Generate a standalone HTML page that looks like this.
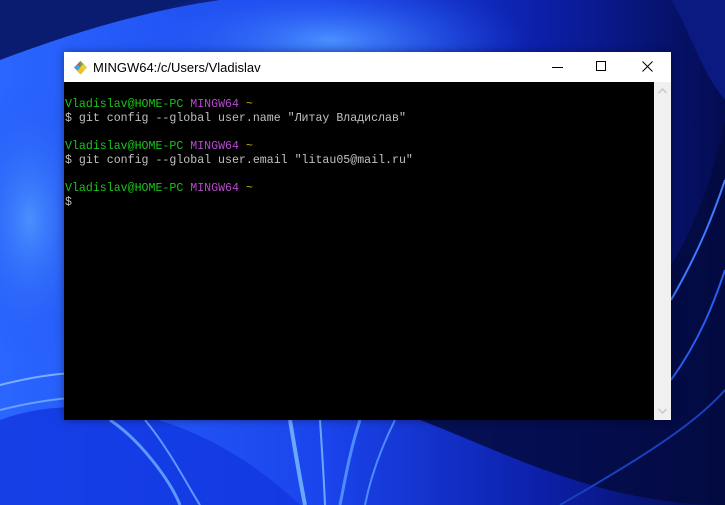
<!DOCTYPE html>
<html><head><meta charset="utf-8"><style>
html,body{margin:0;padding:0;width:725px;height:505px;overflow:hidden}
body{position:relative;background:#1a45e6}
#bg{position:absolute;left:0;top:0}
.win{position:absolute;left:64px;top:52px;width:607px;height:368px;background:#fff;box-shadow:0 0 8px rgba(0,0,0,.4)}
.title{position:absolute;left:0;top:0;width:607px;height:30px;font:13px "Liberation Sans",sans-serif;color:#000}
.title span{position:absolute;left:29px;top:8px}
.term{position:absolute;left:0;top:30px;width:590px;height:338px;background:#000;font:11.6px/14px "Liberation Mono","DejaVu Sans Mono",monospace;color:#c0c0c0;white-space:pre}
.sb{position:absolute;left:590px;top:30px;width:17px;height:338px;background:#f0f0f0}
.g{color:#1cc31c}.p{color:#b848d0}.y{color:#c0b000}
</style></head><body>
<svg id="bg" width="725" height="505" viewBox="0 0 725 505">
<defs>
<linearGradient id="h" x1="0" y1="0" x2="1" y2="0"><stop offset="0" stop-color="#2a66ff"/><stop offset="0.45" stop-color="#1a44ec"/><stop offset="0.75" stop-color="#0c1fa8"/><stop offset="1" stop-color="#040c50"/></linearGradient>
<radialGradient id="pet" cx="0.5" cy="0.5" r="0.5"><stop offset="0" stop-color="#4a90ff"/><stop offset="1" stop-color="#2050f0" stop-opacity="0"/></radialGradient>
</defs>
<rect width="725" height="505" fill="url(#h)"/>
<path d="M0 0 L220 0 C150 10 80 30 0 60Z" fill="#0a1c70"/>
<ellipse cx="330" cy="40" rx="200" ry="60" fill="url(#pet)"/>
<ellipse cx="30" cy="220" rx="70" ry="140" fill="url(#pet)"/>
<path d="M420 420 C500 450 600 505 725 505 L725 120 C700 250 620 400 420 420Z" fill="#030a40" opacity=".85"/>
<path d="M671 0 L725 0 L725 100 C700 70 690 30 671 0Z" fill="#0a1a80"/>
<path d="M0 420 C80 390 200 410 300 505 L0 505Z" fill="#1236e0" opacity=".8"/>
<path d="M0 385 C60 370 90 370 140 380" stroke="#7aaeff" stroke-width="2" fill="none"/>
<path d="M0 410 C60 395 100 395 140 400" stroke="#6aa0ff" stroke-width="2" fill="none"/>
<path d="M110 420 C140 440 170 480 180 505" stroke="#5d9aff" stroke-width="3" fill="none"/>
<path d="M145 420 C170 450 190 490 200 505" stroke="#5d9aff" stroke-width="2" fill="none"/>
<path d="M290 420 C295 450 300 480 305 505" stroke="#6aa8ff" stroke-width="4" fill="none"/>
<path d="M320 420 C322 450 324 480 325 505" stroke="#6aa8ff" stroke-width="2" fill="none"/>
<path d="M360 420 C350 450 345 480 340 505" stroke="#4d8cff" stroke-width="3" fill="none"/>
<path d="M395 420 C380 450 370 480 365 505" stroke="#4d8cff" stroke-width="2" fill="none"/>
<path d="M671 300 C700 250 715 210 725 180" stroke="#3f7aff" stroke-width="2" fill="none"/>
<path d="M671 380 C700 340 715 300 725 270" stroke="#2a5cf0" stroke-width="2" fill="none"/>
<path d="M560 505 C620 470 690 430 725 390" stroke="#1a40c0" stroke-width="2" fill="none"/>
</svg>
<div class="win">
<div class="title">
<svg style="position:absolute;left:9px;top:8px" width="15" height="15" viewBox="0 0 15 15"><path d="M7.5 0.5 L14.5 7.5 L7.5 14.5 L0.5 7.5Z" fill="#e8e8e8"/><path d="M7.5 1 L4 4.5 L7.5 8Z" fill="#e84a3a"/><path d="M7.5 1 L11 4.5 L7.5 8Z" fill="#5abf3a"/><path d="M1 7.5 L4.5 4 L8 7.5 L4.5 11Z" fill="#3aa0e0"/><path d="M7 7.5 L10.5 4 L14 7.5 L10.5 11Z" fill="#e8d030"/><path d="M7.5 7.5 L11 11 L7.5 14.5 L4 11Z" fill="#f0c020"/></svg>
<span>MINGW64:/c/Users/Vladislav</span>
<svg style="position:absolute;left:488px;top:9px" width="12" height="12"><line x1="0" y1="6.5" x2="11" y2="6.5" stroke="#000"/></svg>
<svg style="position:absolute;left:532px;top:9px" width="12" height="12"><rect x="0.5" y="0.5" width="9" height="9" fill="none" stroke="#000"/></svg>
<svg style="position:absolute;left:578px;top:9px" width="12" height="12"><path d="M0.5 0.5 L10.5 10.5 M10.5 0.5 L0.5 10.5" stroke="#000"/></svg>
</div>
<div class="term"><div style="position:absolute;left:1px;top:16px"><span class="g">Vladislav@HOME-PC</span> <span class="p">MINGW64</span> <span class="y">~</span>
$ git config --global user.name "Литау Владислав"

<span class="g">Vladislav@HOME-PC</span> <span class="p">MINGW64</span> <span class="y">~</span>
$ git config --global user.email "litau05@mail.ru"

<span class="g">Vladislav@HOME-PC</span> <span class="p">MINGW64</span> <span class="y">~</span>
$</div></div>
<div class="sb">
<svg style="position:absolute;left:4px;top:6px" width="9" height="6"><path d="M0.5 5 L4.5 1 L8.5 5" stroke="#c8c8c8" fill="none" stroke-width="1.5"/></svg>
<svg style="position:absolute;left:4px;top:326px" width="9" height="6"><path d="M0.5 1 L4.5 5 L8.5 1" stroke="#c8c8c8" fill="none" stroke-width="1.5"/></svg>
</div>
</div>
</body></html>
